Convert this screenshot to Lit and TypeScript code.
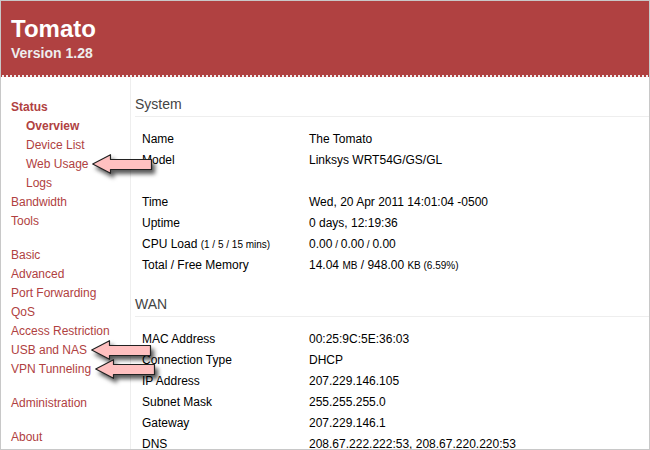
import { LitElement, html, css, svg, nothing } from "lit";
import { customElement, property } from "lit/decorators.js";
import { classMap } from "lit/directives/class-map.js";

interface NavItem {
  label: string;
  sub?: boolean;
  strong?: boolean;
  arrow?: boolean;
}

const NAV: NavItem[][] = [
  [
    { label: "Status", strong: true },
    { label: "Overview", sub: true, strong: true },
    { label: "Device List", sub: true },
    { label: "Web Usage", sub: true, arrow: true },
    { label: "Logs", sub: true },
    { label: "Bandwidth" },
    { label: "Tools" },
  ],
  [
    { label: "Basic" },
    { label: "Advanced" },
    { label: "Port Forwarding" },
    { label: "QoS" },
    { label: "Access Restriction" },
    { label: "USB and NAS", arrow: true },
    { label: "VPN Tunneling", arrow: true },
  ],
  [{ label: "Administration" }],
  [{ label: "About" }],
];

type Row = [unknown, unknown] | null;

const SYSTEM: Row[] = [
  ["Name", "The Tomato"],
  ["Model", "Linksys WRT54G/GS/GL"],
  null,
  ["Time", "Wed, 20 Apr 2011 14:01:04 -0500"],
  ["Uptime", "0 days, 12:19:36"],
  [html`CPU Load <small>(1 / 5 / 15 mins)</small>`, html`0.00<small> / </small>0.00<small> / </small>0.00`],
  ["Total / Free Memory", html`14.04 <small>MB</small> / 948.00 <small>KB (6.59%)</small>`],
];

const WAN: Row[] = [
  ["MAC Address", "00:25:9C:5E:36:03"],
  ["Connection Type", "DHCP"],
  ["IP Address", "207.229.146.105"],
  ["Subnet Mask", "255.255.255.0"],
  ["Gateway", "207.229.146.1"],
  ["DNS", "208.67.222.222:53, 208.67.220.220:53"],
];

// Pink callout arrow pointing left at a menu entry.
@customElement("callout-arrow")
export class CalloutArrow extends LitElement {
  static styles = css`
    :host {
      display: block;
      width: 70px;
      height: 30px;
      pointer-events: none;
    }
    svg {
      display: block;
      overflow: visible;
      filter: drop-shadow(3px 4px 2px rgba(0, 0, 0, 0.65));
    }
  `;
  render() {
    return html`<svg width="70" height="30" viewBox="0 0 70 30" aria-hidden="true">
      ${svg`<path d="M0.7 10 L18.5 0.7 V5.5 H59.5 V15.5 H18.5 V19.3 Z" fill="#ffc0c0" stroke="#222" stroke-width="1.2" stroke-linejoin="round" />`}
    </svg>`;
  }
}

@customElement("info-section")
export class InfoSection extends LitElement {
  @property() heading = "";
  @property({ attribute: false }) rows: Row[] = [];

  static styles = css`
    :host {
      display: block;
    }
    h2 {
      margin: 0 0 12px;
      height: 20px;
      border-bottom: 1px solid #eee;
      font-size: 14px;
      font-weight: normal;
      line-height: 16px;
      color: #444;
    }
    table {
      width: 100%;
      border-collapse: collapse;
      table-layout: fixed;
    }
    th,
    td {
      height: 21px;
      padding: 0 0 0 7px;
      font-weight: normal;
      text-align: left;
      line-height: 21px;
      white-space: nowrap;
    }
    .label {
      width: 160px;
    }
    small {
      font-size: 10px;
      line-height: 1;
    }
  `;
  render() {
    return html`<h2 id="title">${this.heading}</h2>
      <table aria-labelledby="title">
        <tbody>
          ${this.rows.map((row) =>
            row
              ? html`<tr><th class="label" scope="row">${row[0]}</th><td>${row[1]}</td></tr>`
              : html`<tr><td class="label"></td><td></td></tr>`
          )}
        </tbody>
      </table>`;
  }
}

@customElement("app-root")
export class AppRoot extends LitElement {
  static styles = css`
    :host {
      display: flex;
      flex-direction: column;
      box-sizing: border-box;
      height: 100vh;
      overflow: hidden;
      border: 1px solid #c8c8c8;
      background: #fff;
      color: #000;
      font: 12px "Liberation Sans", Arial, sans-serif;
    }
    header {
      flex: none;
      padding: 14px 10px 11px;
      background: #b04141;
      color: #fff;
    }
    .dots {
      flex: none;
      height: 2px;
      background: repeating-linear-gradient(to right, #b04141 0 1px, #eee 1px 3px, #b04141 3px 4px);
    }
    h1 {
      margin: 0;
      font-size: 24px;
      line-height: 28px;
    }
    .version {
      margin: 0;
      padding-bottom: 1px;
      font-size: 14px;
      font-weight: bold;
      line-height: 20px;
      color: #eee;
    }
    .body {
      display: flex;
      flex: 1;
      min-height: 0;
    }
    nav {
      flex: none;
      box-sizing: border-box;
      width: 130px;
      padding: 21px 0 0 10px;
      border-right: 1px solid #eee;
    }
    ul {
      margin: 0 0 15px;
      padding: 0;
      list-style: none;
    }
    li {
      height: 19px;
      line-height: 19px;
      white-space: nowrap;
    }
    .sub {
      padding-left: 15px;
    }
    a {
      position: relative;
      display: inline-block;
      color: #b04141;
      text-decoration: none;
    }
    .strong {
      font-weight: bold;
    }
    callout-arrow {
      position: absolute;
      z-index: 1;
      left: 100%;
      bottom: -10px;
      margin-left: 4px;
    }
    main {
      flex: 1;
      min-width: 0;
      padding: 19px 0 0 4px;
    }
    info-section + info-section {
      margin-top: 20px;
    }
  `;
  render() {
    return html`
      <header>
        <h1>Tomato</h1>
        <p class="version">Version 1.28</p>
      </header>
      <div class="dots"></div>
      <div class="body">
        <nav aria-label="Main">
          ${NAV.map(
            (group) => html`<ul>
              ${group.map(
                (item) => html`<li class=${classMap({ sub: !!item.sub })}>
                  <a href="#" class=${classMap({ strong: !!item.strong })}>${item.label}${item.arrow ? html`<callout-arrow></callout-arrow>` : nothing}</a>
                </li>`
              )}
            </ul>`
          )}
        </nav>
        <main>
          <info-section heading="System" .rows=${SYSTEM}></info-section>
          <info-section heading="WAN" .rows=${WAN}></info-section>
        </main>
      </div>
    `;
  }
}
